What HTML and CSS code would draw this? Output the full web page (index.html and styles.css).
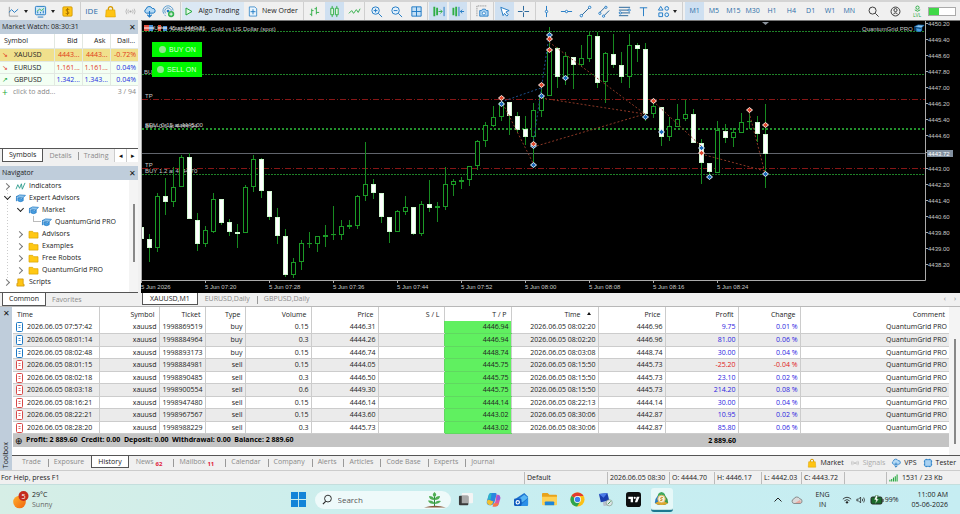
FILE: index.html
```html
<!DOCTYPE html>
<html lang="en">
<head>
<meta charset="utf-8">
<title>XAUUSD,M1 - Trading terminal</title>
<link rel="stylesheet" href="styles.css">
</head>
<body>
<svg class="defs" aria-hidden="true">
  <symbol id="cap" viewBox="0 0 12 10"><path d="M1 3 L5 1 L11.500 1.500 L8.500 4.500 Z" fill="#8fc4ec" stroke="#1d78c4" stroke-width=".8"/><path d="M3 4.500 V7.500 Q6 9.500 9 7.500 V4.500 L7.500 5.500 Z" fill="#4a9fe0" stroke="#1d78c4" stroke-width=".8"/><path d="M1.500 3.500 V8" stroke="#1d78c4"/></symbol>
  <symbol id="folder" viewBox="0 0 12 10"><path d="M1 1.500 H5 L6.500 3 H11 V9 H1 Z" fill="#ffc814" stroke="#dba400" stroke-width=".8"/></symbol>
  <symbol id="bag" viewBox="0 0 12 12"><path d="M4 5 V3.500 A2 2 0 0 1 8 3.500 V5" fill="none" stroke="#d69a00" stroke-width="1.200"/><path d="M2 4.500 H10 L10.500 11 H1.500 Z" fill="#ffc414" stroke="#dba400" stroke-width=".6"/></symbol>
  <symbol id="signal" viewBox="0 0 14 10"><circle cx="7" cy="5" r="1.200" fill="currentColor"/><path d="M4.800 3 Q3.600 5 4.800 7 M9.200 3 Q10.400 5 9.200 7 M3 2 Q1.200 5 3 8 M11 2 Q12.800 5 11 8" fill="none" stroke="currentColor" stroke-width=".8"/></symbol>
  <symbol id="cloud" viewBox="0 0 12 12"><path d="M3 7.500 A2 2 0 0 1 2.800 3.800 A3 3 0 0 1 8.500 3.200 A2.200 2.200 0 0 1 9.500 7.500 Z" fill="#b5daf5" stroke="#1d78c4" stroke-width=".9"/><path d="M6 5.500 V11 M4 9 L6 11 L8 9" fill="none" stroke="#1d78c4"/></symbol>
  <symbol id="doc" viewBox="0 0 7 10"><rect x=".5" y=".5" width="6" height="9" rx="1" fill="#fff" stroke="currentColor"/><path d="M2.500 3.500 H4.500 M2.500 5.500 H4.500" stroke="currentColor" stroke-width=".8"/></symbol>
</svg>

<header class="toolbar">
  <div class="group g-main">
    <button class="tool" aria-label="Chart type"><svg viewBox="0 0 14 14"><path d="M2.500 2 V12 H12" fill="none" stroke="#999"/><path d="M2 8 L5 5 L8 8 L12 4.500" fill="none" stroke="#1d78c4"/></svg></button><span class="caret"></span>
    <button class="tool" aria-label="Profiles"><svg viewBox="0 0 14 14"><rect x="1.500" y="1.500" width="11" height="9" rx="1" fill="#cfe6f8" stroke="#1d78c4"/><path d="M3 7 L6 4.500 L8 6 L11 3.500" fill="none" stroke="#33b04a"/><path d="M4 13 H10 M4 9 V7 M7 9 V7.500 M10 9 V6" stroke="#1d78c4"/></svg></button><span class="caret"></span>
    <button class="tool" aria-label="Market symbols"><svg viewBox="0 0 14 14"><rect x="2" y="2" width="10" height="10" rx="1" fill="#ffc414" stroke="#c89000" stroke-width=".8"/><path d="M9 5 Q7 3.700 5.600 5 Q5 6.500 7 7 Q9 7.500 8.500 9 Q7 10.300 5 9 M7 3.200 V11" fill="none" stroke="#a06c00" stroke-width=".9"/></svg></button>
  </div>
  <div class="group g-services">
    <button class="tool ide">IDE</button>
    <button class="tool" aria-label="Market"><svg viewBox="0 0 12 12"><use href="#bag"/></svg></button>
    <button class="tool muted" aria-label="Signals"><svg viewBox="0 0 14 10"><use href="#signal"/></svg></button>
    <button class="tool" aria-label="VPS"><svg viewBox="0 0 12 12"><use href="#cloud"/></svg></button>
    <button class="tool" aria-label="Community"><svg viewBox="0 0 14 14"><circle cx="6.500" cy="6.500" r="1.500" fill="#1d78c4"/><path d="M2 9.500 A5.500 5.500 0 1 1 12 6 M4 9 A3.500 3.500 0 1 1 10 6.500 M4 12 A6 6 0 0 1 3 10.500" fill="none" stroke="#3c8cc8" stroke-width=".9"/><circle cx="9.800" cy="9.800" r="3.400" fill="#35b450"/><path d="M8 9.800 H11.600 M9.800 8 V11.600" stroke="#fff"/></svg></button>
  </div>
  <div class="group g-trade">
    <button class="tool wide on"><svg viewBox="0 0 10 10"><path d="M2 1.500 L8 5 L2 8.500 Z" fill="#e4f8e6" stroke="#22a83c"/></svg>Algo Trading</button>
    <button class="tool wide"><svg viewBox="0 0 10 12"><path d="M1 1 H7 L9 3 V11 H1 Z" fill="#e9f4fc" stroke="#1d78c4" stroke-width=".8"/><path d="M5 3.500 V9 M2.300 6.200 H7.700" stroke="#1d78c4"/></svg>New Order</button>
  </div>
  <div class="group">
    <button class="tool" aria-label="Bars"><svg viewBox="0 0 14 14"><path d="M4 4 V12 M2 10 H4 M4 6 H6 M9 2 V10 M7 4 H9 M9 8 H12" stroke="#2fae45"/></svg></button>
    <button class="tool on" aria-label="Candles"><svg viewBox="0 0 14 14"><path d="M4.500 1 V13 M9.500 1 V13" stroke="#2fae45"/><path d="M3 3.500 H6 V10.500 H3 Z M8 3.500 H11 V10.500 H8 Z" fill="#dff5df" stroke="#2fae45"/></svg></button>
    <button class="tool" aria-label="Line"><svg viewBox="0 0 14 14"><path d="M1 9 L4 6 L6 9 L9 5 L11 8 L13 4" fill="none" stroke="#2fae45"/></svg></button>
  </div>
  <div class="group">
    <button class="tool" aria-label="Zoom in"><svg viewBox="0 0 14 14"><circle cx="6" cy="6" r="4" fill="#e3f1fc" stroke="#1d78c4"/><path d="M9 9 L13 13 M4 6 H8 M6 4 V8" stroke="#1d78c4"/></svg></button>
    <button class="tool" aria-label="Zoom out"><svg viewBox="0 0 14 14"><circle cx="6" cy="6" r="4" fill="#e3f1fc" stroke="#1d78c4"/><path d="M9 9 L13 13 M4 6 H8" stroke="#1d78c4"/></svg></button>
    <button class="tool" aria-label="Tile windows"><svg viewBox="0 0 14 14"><path d="M2 2 H12 V12 H2 Z M7 2 V12 M2 7 H12" fill="#c4e0f6" stroke="#1d78c4"/></svg></button>
  </div>
  <div class="group g-shift">
    <button class="tool on" aria-label="Auto scroll"><svg viewBox="0 0 14 14"><path d="M2.500 2 V12 M5.500 3 V11" stroke="#2fae45" stroke-width="2"/><path d="M7 7 H11 M9 5 L11 7 L9 9" fill="none" stroke="#2fae45"/><path d="M13 2 V12" stroke="#1d78c4"/></svg></button>
    <button class="tool on" aria-label="Chart shift"><svg viewBox="0 0 14 14"><path d="M1.500 3 V11 M4.500 2 V12" stroke="#2fae45" stroke-width="2"/><path d="M7.500 2 V12 M13 7 H9 M11 5 L9 7 L11 9" fill="none" stroke="#1d78c4"/></svg></button>
  </div>
  <div class="group">
    <button class="tool" aria-label="Screenshot"><svg viewBox="0 0 14 14"><path d="M1 12 V1 H12" fill="none" stroke="#777" stroke-dasharray="1 1"/><path d="M4 6 H6 L7 4.500 H10 L11 6 H13 V12 H4 Z" fill="#a9d2f2" stroke="#1d78c4" stroke-width=".9"/><circle cx="8.500" cy="9" r="1.700" fill="#fff" stroke="#1d78c4" stroke-width=".8"/></svg></button>
  </div>
  <div class="group g-cursor">
    <button class="tool on" aria-label="Cursor"><svg viewBox="0 0 14 14"><path d="M3 2.500 L12 6 L8.500 7.500 L11 10.500 L9.500 12 L7 9 L5.500 11.500 Z" fill="#fff" stroke="#1d78c4"/></svg></button>
    <button class="tool" aria-label="Crosshair"><svg viewBox="0 0 14 14"><path d="M7 1 V6 M7 8 V13 M1 7 H6 M8 7 H13" stroke="#1d5f96"/></svg></button>
  </div>
  <div class="group g-draw">
    <button class="tool" aria-label="Vertical line"><svg viewBox="0 0 14 14"><path d="M7 1 V13" stroke="#1d78c4"/><circle cx="7" cy="7" r="1.300" fill="#fff" stroke="#1d78c4"/></svg></button>
    <button class="tool" aria-label="Horizontal line"><svg viewBox="0 0 14 14"><path d="M1 7 H13" stroke="#1d78c4"/><circle cx="7" cy="7" r="1.300" fill="#fff" stroke="#1d78c4"/></svg></button>
    <button class="tool" aria-label="Trend line"><svg viewBox="0 0 14 14"><path d="M2 12 L12 2" stroke="#1d5f96"/><circle cx="2.500" cy="11.500" r="1.300" fill="#fff" stroke="#1d78c4"/><circle cx="11.500" cy="2.500" r="1.300" fill="#fff" stroke="#1d78c4"/></svg></button>
    <button class="tool" aria-label="Channel"><svg viewBox="0 0 14 14"><path d="M2 8 L8 2 M6 12 L12 6" stroke="#1d5f96"/><circle cx="2" cy="9" r="1.200" fill="#fff" stroke="#1d78c4"/><circle cx="8.500" cy="2.500" r="1.200" fill="#fff" stroke="#1d78c4"/><circle cx="6" cy="12" r="1.200" fill="#fff" stroke="#1d78c4"/></svg></button>
    <button class="tool" aria-label="Fibonacci"><svg viewBox="0 0 14 14"><path d="M1 2.500 H13 M1 5.500 H11 M3 8.500 H13 M1 11.500 H11" stroke="#1d5f96"/><circle cx="12" cy="5.500" r="1.200" fill="#fff" stroke="#1d78c4"/><circle cx="2.500" cy="8.500" r="1.200" fill="#fff" stroke="#1d78c4"/></svg></button>
    <button class="tool" aria-label="Text"><svg viewBox="0 0 14 14"><path d="M3 3 H11 M7 3 V12" stroke="#1d78c4"/></svg></button>
    <button class="tool" aria-label="Shapes"><svg viewBox="0 0 14 14"><path d="M1.500 5.500 L4 1.500 L6.500 5.500 Z M2 8.500 H6 V12.500 H2 Z" fill="#e3f1fc" stroke="#1d78c4"/><circle cx="10.500" cy="3.700" r="2" fill="#e3f1fc" stroke="#1d78c4"/><circle cx="10.500" cy="10.500" r="2" fill="#e3f1fc" stroke="#1d78c4"/></svg></button>
    <span class="caret"></span>
  </div>
  <div class="group g-frames">
    <button class="tool on">M1</button><button class="tool">M5</button><button class="tool">M15</button><button class="tool">M30</button><button class="tool">H1</button><button class="tool">H4</button><button class="tool">D1</button><button class="tool">W1</button><button class="tool">MN</button>
  </div>
  <div class="group g-right">
    <button class="tool" aria-label="Search"><svg viewBox="0 0 14 14"><circle cx="6" cy="6" r="3.800" fill="none" stroke="#333"/><path d="M9 9 L12.500 12.500" stroke="#333"/></svg></button>
    <button class="tool" aria-label="Account"><svg viewBox="0 0 14 14"><circle cx="7" cy="7" r="4.800" fill="none" stroke="#333"/><circle cx="7" cy="5.500" r="1.700" fill="none" stroke="#333"/><path d="M4 10.500 Q7 6.500 10 10.500" fill="none" stroke="#333"/></svg></button>
    <button class="tool lvl"><svg viewBox="0 0 10 8"><circle cx="5" cy="2.500" r="1.800" fill="none" stroke="#22a83c"/><path d="M2 5 Q5 8 8 5" fill="none" stroke="#22a83c"/></svg>LVL</button>
    <meter class="load" min="0" max="100" value="40" aria-label="Load">40</meter>
  </div>
</header>

<main class="work">
  <aside class="side">
    <section class="watch">
      <h2 class="title">Market Watch: 08:30:31<button class="close" aria-label="Close">✕</button></h2>
      <table class="quotes">
        <colgroup><col><col class="bid"><col class="bid"><col class="bid"></colgroup>
        <thead><tr><th>Symbol</th><th>Bid</th><th>Ask</th><th>Dail...</th></tr></thead>
        <tbody>
          <tr class="gold"><td><span class="dir down">↘</span>XAUUSD</td><td class="neg">4443...</td><td class="neg">4443...</td><td class="neg">-0.72%</td></tr>
          <tr><td><span class="dir down">↘</span>EURUSD</td><td class="neg">1.161...</td><td class="neg">1.161...</td><td class="pos">0.04%</td></tr>
          <tr><td><span class="dir up">↗</span>GBPUSD</td><td class="pos">1.342...</td><td class="pos">1.343...</td><td class="pos">0.04%</td></tr>
        </tbody>
      </table>
      <div class="add"><span><b>+</b>click to add...</span><span>3 / 94</span></div>
    </section>
    <nav class="tabs side-tabs"><button class="tab on">Symbols</button><button class="tab">Details</button><button class="tab">Trading</button><span class="arrows"><button aria-label="Previous">◂</button><button aria-label="Next">▸</button></span></nav>
    <section class="navigator">
      <h2 class="title">Navigator<button class="close" aria-label="Close">✕</button></h2>
      <div class="tree-box">
        <ul class="tree">
          <li class="l1"><i class="chev"></i><svg viewBox="0 0 12 10"><path d="M1 8 L3 3 L5 7 L7 2 L8 8 L11 1" fill="none" stroke="#2c9c8c"/></svg>Indicators</li>
          <li class="l1"><i class="chev open"></i><svg viewBox="0 0 12 10"><use href="#cap"/></svg>Expert Advisors</li>
          <li class="l2"><i class="chev open"></i><svg viewBox="0 0 12 10"><use href="#cap"/></svg>Market</li>
          <li class="l3"><i class="elbow"></i><svg viewBox="0 0 12 10"><use href="#cap"/></svg>QuantumGrid PRO</li>
          <li class="l2"><i class="chev"></i><svg viewBox="0 0 12 10"><use href="#folder"/></svg>Advisors</li>
          <li class="l2"><i class="chev"></i><svg viewBox="0 0 12 10"><use href="#folder"/></svg>Examples</li>
          <li class="l2"><i class="chev"></i><svg viewBox="0 0 12 10"><use href="#folder"/></svg>Free Robots</li>
          <li class="l2"><i class="chev"></i><svg viewBox="0 0 12 10"><use href="#folder"/></svg>QuantumGrid PRO</li>
          <li class="l1"><i class="chev"></i><svg viewBox="0 0 12 10"><path d="M3 1 H9 V7 H10 V9 H2 V6 H3 Z" fill="#ffc414" stroke="#c89000" stroke-width=".8"/></svg>Scripts</li>
        </ul>
        <span class="scroll"></span>
      </div>
    </section>
    <nav class="tabs side-tabs"><button class="tab on">Common</button><button class="tab">Favorites</button></nav>
  </aside>

  <section class="chart-pane">
    <div class="chart">
      <svg id="chart" viewBox="141 21 819 272" preserveAspectRatio="xMaxYMin meet" role="img" aria-label="Gold vs US Dollar, one minute candles"></svg>
      <div class="switches">
        <button>BUY ON</button>
        <button>SELL ON</button>
      </div>
    </div>
    <nav class="tabs chart-tabs"><button class="tab on">XAUUSD,M1</button><button class="tab">EURUSD,Daily</button><button class="tab">GBPUSD,Daily</button><span class="pager">‹<i></i>›</span></nav>
  </section>
</main>

<section class="toolbox">
  <div class="rail"><button class="close" aria-label="Close">✕</button><span>Toolbox</span></div>
  <div class="box-body">
    <div class="history-box">
      <table class="history">
        <colgroup><col class="c1"><col class="c2"><col class="c3"><col class="c4"><col class="c5"><col class="c6"><col class="c7"><col class="c8"><col class="c9"><col class="c10"><col class="c11"><col class="c12"><col></colgroup>
        <thead><tr><th>Time</th><th>Symbol</th><th>Ticket</th><th>Type</th><th>Volume</th><th>Price</th><th>S / L</th><th>T / P</th><th>Time<i class="sort"></i></th><th>Price</th><th>Profit</th><th>Change</th><th>Comment</th></tr></thead>
        <tbody id="deals"></tbody>
        <tfoot><tr><td colspan="10"><span class="plus">⊕</span>Profit: 2 889.60&nbsp; Credit: 0.00&nbsp; Deposit: 0.00&nbsp; Withdrawal: 0.00&nbsp; Balance: 2 889.60</td><td>2 889.60</td><td colspan="2"></td></tr></tfoot>
      </table>
      <span class="scroll"></span>
    </div>
    <nav class="tabs box-tabs">
      <button class="tab">Trade</button><button class="tab">Exposure</button><button class="tab on">History</button><button class="tab">News<sub>62</sub></button><button class="tab">Mailbox<sub>11</sub></button><button class="tab">Calendar</button><button class="tab">Company</button><button class="tab">Alerts</button><button class="tab">Articles</button><button class="tab">Code Base</button><button class="tab">Experts</button><button class="tab">Journal</button>
      <span class="links">
        <button><svg viewBox="0 0 12 12"><use href="#bag"/></svg>Market</button>
        <button class="muted"><svg viewBox="0 0 14 10"><use href="#signal"/></svg>Signals</button>
        <button><svg viewBox="0 0 12 12"><use href="#cloud"/></svg>VPS</button>
        <button><svg viewBox="0 0 12 12"><path d="M1 4 H11 M1 8 H11 M4 1 V11 M8 1 V11" stroke="#1d78c4"/><rect x="2" y="2" width="8" height="8" rx="1" fill="#a9d2f2" stroke="#1d78c4"/></svg>Tester</button>
      </span>
    </nav>
  </div>
</section>

<footer class="status">
  <span class="help">For Help, press F1</span><span>Default</span><span>2026.06.05 08:30</span><span>O: 4444.70</span><span>H: 4446.17</span><span>L: 4442.03</span><span>C: 4443.72</span><span></span>
  <span class="net"><svg viewBox="0 0 10 8"><path d="M1 8 V6 M3 8 V5 M5 8 V3.500 M7 8 V2 M9 8 V0" stroke="#22a83c" stroke-width="1.200"/></svg>1531 / 23 Kb</span>
</footer>

<div class="taskbar">
  <div class="weather">
    <svg viewBox="0 0 16 18"><defs><linearGradient id="sun" x1="0" y1="0" x2="1" y2="1"><stop offset="0" stop-color="#ffb02e"/><stop offset="1" stop-color="#f0640c"/></linearGradient></defs><circle cx="6.500" cy="11" r="6.300" fill="url(#sun)"/><circle cx="10.500" cy="5" r="5" fill="#c42b1c"/><text x="10.500" y="7.500" text-anchor="middle">5</text></svg>
    <p>29°C<br><span>Sunny</span></p>
  </div>
  <div class="apps">
    <button aria-label="Start"><svg viewBox="0 0 16 16"><path d="M0 0 H7.500 V7.500 H0 Z M8.500 0 H16 V7.500 H8.500 Z M0 8.500 H7.500 V16 H0 Z M8.500 8.500 H16 V16 H8.500 Z" fill="#1384d8"/></svg></button>
    <label class="search"><svg viewBox="0 0 12 12"><circle cx="6.500" cy="5" r="3.700" fill="none" stroke="#222"/><path d="M4 8 L1 11" stroke="#222" stroke-width="1.300"/></svg><input type="text" placeholder="Search" aria-label="Search"><svg class="plant" viewBox="0 0 22 16"><path d="M0 15.500 Q11 12 22 15.500 Z" fill="#8a5a3c"/><path d="M10.500 14 V3" stroke="#2e8540"/><path d="M10.500 5 Q7 3 10.500 0 Q14 3 10.500 5 M10.500 8 Q5 8 5 4 Q10 4 10.500 8 Q11 4 16 4 Q16 8 10.500 8 M10.500 12 Q5 12 4 8.500 Q10 8 10.500 12 Q12 8 17 9 Q15 12 10.500 12" fill="#4fae55"/></svg></label>
    <button aria-label="Task view"><svg viewBox="0 0 16 16"><rect x="4" y="1" width="12" height="11" rx="1" fill="#f4f4f4"/><rect x="1" y="4" width="10" height="10" rx="1" fill="#3a3a3a"/><rect x="4" y="4" width="7" height="8" fill="#a8a8a8"/></svg></button>
    <button aria-label="Copilot"><svg viewBox="0 0 16 16"><path d="M5 1 H10 Q12 1 11 4 L9 11 Q8 14 5 14 H4 Q0 14 1 9 L3 3 Q3.500 1 5 1" fill="#2a86e0"/><path d="M2 8 L1 10 Q1 14 5 14 Q7 13 8 10 Z" fill="#f2c02e"/><path d="M3 3 Q4 1 6 1 L5 8 L2 8 Z" fill="#2bb7c8"/><path d="M11 3 H12.500 Q16 3 15 8 L13.500 13 Q13 15.500 10 15.500 H7 Q9 14 10 10 Z" fill="#d957a8"/><path d="M12.500 3 Q16 4 15 8 L11 9 Z" fill="#9058e0"/><path d="M8 12 L13.500 12 Q13 15.500 10 15.500 H7 Z" fill="#f47a48"/></svg></button>
    <button aria-label="Outlook"><svg viewBox="0 0 16 16"><path d="M2 7 L11 1 L15 5 V13 Q15 15 13 15 H4 V8 Z" fill="#1e74d0"/><path d="M4 8 L11 3 L15 6 L9 11 Z" fill="#57b6f4"/><path d="M6 15 L15 7 V13 Q15 15 13 15 Z" fill="#2b8fe8"/><rect x="0" y="7" width="8" height="8" rx="1.500" fill="#0f5cbf"/><circle cx="4" cy="11" r="1.800" fill="none" stroke="#fff" stroke-width="1.200"/></svg></button>
    <button aria-label="File Explorer"><svg viewBox="0 0 16 16"><path d="M0 2 Q0 1 1 1 H6 L8 3 H15 Q16 3 16 4 V13 H0 Z" fill="#e8a31c"/><path d="M0 5 H16 V13 Q16 14 15 14 H1 Q0 14 0 13 Z" fill="#ffd154"/><path d="M3 14 V11 Q3 10 4 10 H12 Q13 10 13 11 V14 Z" fill="#1f86d8"/></svg></button>
    <button aria-label="Chrome"><svg viewBox="0 0 16 16"><circle cx="8" cy="8" r="7.500" fill="#fbc116"/><path d="M8 8 L1.500 4.200 A7.500 7.500 0 0 1 14.500 4.200 H8 Z" fill="#e33b2e"/><path d="M8 8 L1.500 4.200 A7.500 7.500 0 0 0 7.500 15.500 L11 10 Z" fill="#2da44e"/><circle cx="8" cy="8" r="3.700" fill="#fff"/><circle cx="8" cy="8" r="2.900" fill="#3b7ded"/></svg></button>
    <button aria-label="Remote desktop"><svg viewBox="0 0 16 16"><path d="M1 2 L10 1 L12 9 L3 11 Z" fill="#1b3fae"/><path d="M1 2 L10 1 L6 6 Z" fill="#4b7be8"/><path d="M5 11 L10 10 L13 14 L6 15 Z" fill="#b8c0cc"/><circle cx="12" cy="11.500" r="3.300" fill="#dfe6ea" stroke="#7f9a86" stroke-width=".7"/><path d="M10.500 13 L13.500 10" stroke="#3b9c4a"/></svg></button>
    <button aria-label="TradingView"><svg viewBox="0 0 16 16"><rect width="16" height="16" rx="3" fill="#0d0f10"/><path d="M2.500 5 H7.500 V11 H5 V7.500 H2.500 Z M11.500 5 H14.500 L12 11 H9.500 Z" fill="#fff"/><circle cx="9.300" cy="6.200" r="1.200" fill="#fff"/></svg></button>
    <button class="active" aria-label="Trading terminal"><svg viewBox="0 0 16 16"><path d="M4 8 Q3 2 8 1 Q13 2 12 8 Z" fill="#3fa860"/><path d="M4 5 Q1 8 1 12 Q2 15 7 15 Z" fill="#2b7ec0"/><path d="M12 5 Q15 8 15 12 Q14 15 9 15 Z" fill="#3c9a4c"/><path d="M1 13 Q8 17 15 13 L10 11 H5 Z" fill="#e0a82e"/><circle cx="8" cy="8.500" r="4" fill="#f5efe0" stroke="#d8b45c"/><path d="M9.500 7 Q7 6 7 8 Q9.500 8.500 8.500 10 L6.500 10" fill="none" stroke="#d08a1c"/></svg></button>
  </div>
  <div class="tray">
    <svg viewBox="0 0 10 10"><path d="M1.500 6.500 L5 3 L8.500 6.500" fill="none" stroke="#222"/></svg>
    <svg class="wide" viewBox="0 0 12 10"><path d="M3 8.500 A2.300 2.300 0 0 1 2.800 4 A3.300 3.300 0 0 1 8.800 3.800 A2.400 2.400 0 0 1 9.300 8.500 Z" fill="#dadada" stroke="#777" stroke-width=".8"/><path d="M4 8 L9 5 L10 8 Z" fill="#e9a9a0"/></svg>
    <p class="lang">ENG<br>IN</p>
    <svg viewBox="0 0 12 10"><path d="M1 4 Q6 -.5 11 4 M2.800 6 Q6 3 9.200 6" fill="none" stroke="#222"/><circle cx="6" cy="7.800" r="1.400" fill="#222"/></svg>
    <svg viewBox="0 0 12 10"><path d="M1 4 H3 L5.500 1.500 V8.500 L3 6 H1 Z M7.500 3.500 Q8.500 5 7.500 6.500 M9.200 2 Q11.200 5 9.200 8" fill="none" stroke="#222" stroke-width=".9"/></svg>
    <span class="battery"><svg viewBox="0 0 14 10"><rect x="1" y="2" width="11" height="7" rx="1.500" fill="#1c6a2a" stroke="#222"/><path d="M13 4 V7" stroke="#222"/><path d="M6 0 L4 5 H6 L5 9 L9 4 H7 L8 0 Z" fill="#fff" stroke="#1c6a2a" stroke-width=".6"/></svg>99%</span>
    <p class="clock">11:00 AM<br>05-06-2026</p>
  </div>
</div>
<script src="app.js"></script>
</body>
</html>
```
FILE: styles.css
```css
* { box-sizing: border-box; }
body {
  margin: 0;
  height: 100vh;
  display: flex;
  flex-direction: column;
  overflow: hidden;
  background: #f0f0f0;
  color: #222;
  font: 7px/12px "Open Sans", "Noto Sans", sans-serif;
}
button, input { font: inherit; color: inherit; border: 0; padding: 0; margin: 0; background: none; }
p, h2, ul { margin: 0; padding: 0; font-weight: 400; }
.defs { position: absolute; width: 0; height: 0; }
.muted { color: #aaa; }

/* toolbar */
.toolbar {
  flex: none;
  height: 20px;
  display: grid;
  grid-template-columns: 80px 100px 123px 61px 63px 43px 23px 42px 147px 177px 1fr;
  border-top: 2px solid #d4d4d4;
}
.group { display: flex; min-width: 0; padding-left: 1px; }
.group + .group { border-left: 1px solid #cfcfcf; }
.tool { flex: 1; display: flex; align-items: center; justify-content: center; color: #2a6da8; white-space: nowrap; }
.tool svg { width: 13px; height: 13px; flex: none; }
.tool.on { background: #cfe0f1; }
.tool.muted { color: #aaa; }
.ide { font-size: 8px; }
.caret { flex: none; align-self: center; width: 0; border: 2px solid transparent; border-top: 3px solid #222; border-bottom: 0; margin: 0 2px 0 0; }
.g-main { padding: 0 2px 0 3px; }
.g-services { padding-right: 2px; }
.tool.wide { flex: none; color: #222; width: 62px; gap: 5px; padding-right: 3px; }
.tool.wide + .wide { gap: 4px; padding: 0; width: 58px; }
.tool.wide svg { width: 10px; height: 11px; }
.tool.wide.on { background: #dbe8f4; }
.g-shift { padding-right: 3px; gap: 2px; }
.g-cursor { padding-right: 2px; }
.g-draw .caret { margin-right: 5px; }
.g-frames { border-right: 0; padding-left: 2px; }
.group.g-right { border-left: 0; justify-content: flex-end; align-items: center; padding-right: 4px; }
.g-right .tool { flex: none; width: 22px; }
.tool.lvl { flex-direction: column; color: #22a83c; font-size: 5px; line-height: 5px; }
.tool.lvl svg { width: 9px; height: 8px; }
.load { appearance: none; width: 28px; height: 9px; border: 1px solid #aaa; background: linear-gradient(90deg, #40d848 40%, #fff 40%); }
.load::-webkit-meter-inner-element { display: none; }

/* panes */
.work { flex: 1; min-height: 0; display: grid; grid-template-columns: 138px 1fr; column-gap: 3px; }
.side { display: flex; flex-direction: column; min-height: 0; }
.title { flex: none; height: 14px; display: flex; justify-content: space-between; align-items: center; background: #bfcddb; font-size: 7px; padding: 0 2px; }
.close { font-size: 8px; line-height: 8px; width: 8px; color: #111; }
.watch { height: 128px; background: #fff; }
.quotes { width: 100%; table-layout: fixed; border-collapse: collapse; }
.bid { width: 28px; }
.quotes th, .quotes td { padding: 0 2px; height: 12px; text-align: right; font-weight: 400; white-space: nowrap; overflow: hidden; border: 1px solid #e2e8e2; border-width: 0 0 1px 1px; }
.quotes th { height: 14px; padding: 0 4px; }
.quotes th:last-child { padding-right: 3px; }
.quotes th:first-child, .quotes td:first-child { text-align: left; border-left: 0; }
.quotes td { background: #f3fff3; line-height: 11px; }
.quotes .gold td { background: #f0e08c; height: 13px; }
.dir { display: inline-block; width: 12px; }
.down, .quotes .neg { color: #e03a1a; }
.up { color: #22a83c; }
.quotes .pos { color: #1c2ee0; }
.add { display: flex; justify-content: space-between; padding: 0 2px; color: #888; }
.add b { display: inline-block; width: 11px; color: #22a83c; font-size: 10px; font-weight: 400; vertical-align: bottom; }

.tabs { display: flex; color: #8a8a8a; }
.tab { padding: 0 9px; position: relative; white-space: nowrap; }
.tab + .tab::before { content: ""; position: absolute; left: 0; top: 3px; height: 8px; border-left: 1px solid #999; }
.tab.on::before, .tab.on + .tab::before { display: none; }
.tab.on { background: #fff; color: #222; border: 1px solid #555; border-top: 0; }
.side-tabs { flex: none; height: 14px; border-top: 1px solid #555; padding-left: 2px; }
.side-tabs .tab { padding: 0 6px; }
.arrows { margin-left: auto; display: flex; background: #fff; }
.arrows button { width: 12px; border-left: 1px solid #ccc; color: #111; line-height: 10px; }
.navigator { flex: 1; min-height: 0; display: flex; flex-direction: column; margin-top: 4px; }
.tree-box { flex: 1; min-height: 0; display: flex; background: #fff; overflow: hidden; }
.tree { flex: 1; list-style: none; background: repeating-linear-gradient(#fff 0 2px, #ccc 2px 3px) 7px 8px / 1px 92px no-repeat; }
.tree li { display: flex; align-items: center; height: 12px; padding-left: 4px; }
.tree .l2 { padding-left: 17px; }
.tree .l3 { padding-left: 33px; }
.tree svg { width: 11px; height: 9px; margin-right: 3px; }
.chev, .elbow { width: 11px; height: 6px; display: flex; }
.chev::before { content: ""; width: 4px; height: 4px; margin-top: 1px; border: solid #777; border-width: 1px 1px 0 0; transform: rotate(45deg); }
.chev.open::before { border-color: #222; margin-top: -1px; margin-left: 1px; transform: rotate(135deg); }
.elbow { width: 8px; align-self: flex-start; border: solid #bbb; border-width: 0 0 1px 1px; }
.scroll { flex: none; width: 9px; background: #f4f4f4; }
.scroll::before { content: ""; display: block; width: 2px; height: 58px; margin: 24px 0 0 4px; background: #888; }

/* chart */
.chart-pane { min-width: 0; display: flex; flex-direction: column; border-top: 1px solid #777; }
.chart { flex: 1; min-height: 0; position: relative; background: #000; }
#chart { display: block; width: 100%; height: 100%; font: 6px "Liberation Sans", sans-serif; fill: #c8c8c8; }
.body-up { fill: #000; stroke: #1b9a26; }
.body-down { fill: #fff; stroke: #d0f8d0; }
.wick { stroke: #178a20; }
.order { stroke: #1f8228; stroke-dasharray: 2 1; }
.order.strong { stroke-width: 2; stroke: #23902c; stroke-dasharray: 2 2; }
.target { stroke: #861616; stroke-dasharray: 6 2 1 2; }
.now { stroke: #60646c; }
.axis { stroke: #aaa; fill: none; }
.deal-sell { stroke: #8c3826; stroke-dasharray: 2 2; stroke-width: 1; }
.deal-buy { stroke: #1c4f8c; stroke-dasharray: 2 2; stroke-width: 1; }
.mark-buy { fill: #1a68b8; stroke: #dcebf8; }
.mark-sell { fill: #e2492e; stroke: #fbe6e0; }
.now-box { fill: #8290a0; }
.now-text { fill: #fff; }
.switches { position: absolute; left: 11px; top: 21px; display: flex; flex-direction: column; gap: 5px; }
.switches button { width: 50px; height: 15px; background: #00f800; color: #d8ffd8; font: 7px/15px "Liberation Sans", sans-serif; display: flex; align-items: center; gap: 3px; padding-left: 7px; white-space: nowrap; }
.switches button + button { padding-left: 5px; }
.switches button::before { content: ""; width: 7px; height: 7px; border-radius: 50%; background: #90e890; }
.chart-tabs { flex: none; height: 13px; padding: 0 4px 1px 1px; }
.chart-tabs .tab { padding: 0 7px; }
.pager { margin-left: auto; color: #888; display: flex; gap: 4px; }

/* toolbox */
.toolbox { flex: none; display: flex; border-top: 1px solid #b8b8b8; }
.rail { flex: none; width: 12px; background: #bfcddb; display: flex; flex-direction: column; justify-content: space-between; align-items: center; padding: 2px 0; }
.rail span { writing-mode: vertical-rl; transform: rotate(180deg); }
.box-body { flex: 1; min-width: 0; }
.history-box { display: flex; background: #fff; padding: 0 0 9px 1px; height: 148px; }
.history { flex: 1; width: 0; table-layout: fixed; border-collapse: collapse; }
.history-box .scroll { width: 11px; margin-bottom: -9px; }
.history-box .scroll::before { height: 105px; margin: 32px 0 0 5px; }
.history th, .history td { padding: 0 2px; text-align: right; font-weight: 400; white-space: nowrap; overflow: hidden; border-left: 1px solid #ccc; line-height: 11px; height: 12px; }
.history th { height: 14px; padding-right: 4px; padding-top: 1px; }
.history th:first-child, .history td:first-child { text-align: left; border-left: 0; }
.history th:first-child { padding-left: 4px; }
.history tbody td { border-bottom: 1px solid #ccc; }
.history tbody tr:nth-child(even) td { background: #ebebeb; height: 13px; }
.history tbody td:nth-child(8), .history tbody tr:nth-child(even) td:nth-child(8) { background: #60f060; border-color: #60d860; }
.history .gain { color: #2a22e0; }
.history .loss { color: #e02020; }
.history svg { width: 7px; height: 10px; margin: 0 4px 0 1px; vertical-align: middle; }
.buy { color: #1d78c4; }
.sell { color: #d84848; }
.history tfoot td { height: 13px; border: 0; background: #c4c4c4; color: #000; font-weight: 700; }
.plus { display: inline-block; width: 11px; font-weight: 400; font-size: 9px; vertical-align: middle; }
.sort { display: inline-block; border: 2px solid transparent; border-bottom: 3px solid #111; border-top: 0; margin: 0 3px 2px 6px; }
.c1 { width: 86px; } .c2 { width: 60px; } .c3 { width: 46px; } .c4 { width: 40px; } .c5 { width: 66px; }
.c6 { width: 67px; } .c7 { width: 66px; } .c8 { width: 67px; } .c9 { width: 87px; } .c10 { width: 67px; }
.c11 { width: 73px; } .c12 { width: 62px; }
.box-tabs { height: 15px; border-top: 1px solid #555; background: #f0f0f0; align-items: stretch; gap: 1px; }
.box-tabs .tab { padding: 0 6px; height: 12px; }
.box-tabs .tab:first-child { margin-left: 4px; }
.box-tabs .tab sub { color: #e0203c; font-size: 6px; font-weight: 700; line-height: 6px; margin: 0 4px 0 2px; }
.links { margin-left: auto; display: flex; gap: 6px; padding-right: 4px; color: #222; }
.links .muted { color: #aaa; }
.links button { display: flex; align-items: center; gap: 3px; }
.links svg { width: 10px; height: 10px; }

/* status bar */
.status { flex: none; height: 14px; display: grid; grid-template-columns: 524px 83px 62px 45px 47px 40px 43px 42px 1fr; border-top: 1px solid #ccc; align-items: center; }
.status span { height: 12px; border-left: 1px solid #bbb; padding-left: 2px; white-space: nowrap; }
.status .help { border: 0; padding-left: 1px; }
.net svg { width: 9px; height: 8px; margin-right: 4px; vertical-align: middle; }

/* taskbar */
.taskbar { flex: none; height: 30px; display: grid; grid-template-columns: 1fr auto 1fr; align-items: center; background: linear-gradient(90deg, #d6eee6, #c8eef0 50%, #c6edf2); border-top: 1px solid #c4dedd; line-height: 10px; }
.weather { display: flex; align-items: center; gap: 3px; padding-left: 13px; }
.weather svg { width: 16px; height: 18px; }
.weather text { font: 7px "Open Sans", sans-serif; fill: #fff; }
.weather span { color: #666; }
.apps { display: flex; align-items: center; gap: 6px; }
.apps button { width: 22px; height: 24px; display: flex; align-items: center; justify-content: center; border-radius: 3px; margin-right: 0; }
.apps button svg { width: 15px; height: 15px; }
.apps .active { background: #e6f8f8; box-shadow: inset 0 -1px #bfe0e0; border-bottom: 2px solid #1c7890; }
.search { display: flex; align-items: center; width: 136px; height: 18px; border-radius: 9px; background: #eefafa; padding: 0 5px 0 7px; margin: 0 -2px 0 -1px; }
.search svg { width: 11px; height: 11px; flex: none; }
.search .plant { width: 22px; height: 16px; }
.search input { flex: 1; min-width: 0; margin-left: 5px; font-size: 8px; outline: 0; }
.search input::placeholder { color: #555; opacity: 1; }
.tray { display: flex; align-items: center; justify-content: flex-end; gap: 4px; padding-right: 12px; }
.tray > svg { width: 10px; height: 10px; }
.tray > svg.wide { width: 12px; margin-left: 4px; }
.lang { text-align: center; margin: 0 8px; }
.battery { display: flex; align-items: center; gap: 1px; }
.battery svg { flex: none; width: 14px; height: 10px; }
.clock { text-align: right; margin-left: 9px; }
```
FILE: app.js
```js
// Candles run every 8 units: [high, body top, body bottom, low, rising]
const candles = [
  [227,227,239,239,0],[234,239,248,262,0],[193,196,248,252,1],[178,196,202,215,0],[167,187,202,207,1],
  [155,157,187,187,1],[153,157,219,219,0],[213,220,244,251,0],[226,230,244,247,1],[193,199,232,233,1],
  [199,199,223,225,0],[219,222,232,236,0],[224,232,234,248,0],[185,187,233,233,1],[155,159,187,192,1],
  [158,159,191,198,0],[191,191,217,220,0],[208,217,236,244,0],[229,236,275,277,0],[258,262,275,278,1],
  [240,243,262,270,1],[232,243,244,248,1],[236,236,244,252,1],[225,235,237,247,1],[206,234,235,240,1],
  [220,226,235,240,1],[220,225,227,229,1],[195,196,226,229,1],[142,184,196,201,1],[179,184,193,199,0],
  [193,193,217,223,0],[217,217,232,243,0],[210,211,232,232,1],[196,207,212,215,1],[207,207,234,235,0],
  [201,204,234,236,1],[180,204,208,212,0],[202,206,208,222,1],[167,184,207,210,1],[179,181,185,196,1],
  [177,180,182,189,1],[166,166,180,186,1],[140,141,166,170,1],[122,125,141,147,1],[106,117,126,127,1],
  [98,102,117,121,1],[102,102,116,135,0],[112,116,130,133,0],[116,129,137,145,0],[103,110,137,165,1],
  [87,97,111,117,1],[27,49,96,96,1],[47,48,77,88,0],[52,56,78,85,1],[57,57,65,89,0],
  [45,58,65,67,1],[32,35,59,62,1],[32,36,83,88,0],[52,53,82,103,1],[34,54,65,68,0],
  [52,65,77,83,0],[34,45,77,88,1],[43,45,49,62,0],[43,49,114,121,0],[100,106,114,118,1],
  [107,107,137,146,0],[117,126,137,141,1],[104,119,127,127,1],[100,114,119,121,1],[109,114,143,143,0],
  [139,143,163,184,0],[163,163,172,180,0],[121,130,173,173,1],[124,131,138,143,0],[128,132,138,147,1],
  [113,122,133,133,1],[110,121,122,129,1],[116,122,134,142,0],[104,134,154,188,0]
];
const line = (x1, y1, x2, y2, c) => `<line x1="${x1}" y1="${y1}" x2="${x2}" y2="${y2}" class="${c}"/>`;
const text = (x, y, s, c = "") => `<text x="${x}" y="${y}" class="${c}">${s}</text>`;
let out = "";

[[31.5,"order"],[74.5,"order"],[99.5,"target"],[129,"order strong"],[153.5,"now"],[168.5,"target"],[174.5,"order"]]
  .forEach(([y, c]) => { out += line(142, y, 925, y, c); });

out += text(144, 74, "BUY") + text(145, 98, "TP") + text(145, 127, "SELL 0.15 at 4445.00") + text(145, 128, "BUY 0.6 at 4444.94")
  + text(145, 167, "TP") + text(145, 173, "BUY 1.2 at 4444.70")
  + text(150, 30, "BUY 0.45 at 4449.81") + text(170, 31, "XAUUSD,M1:") + text(211, 31, "Gold vs US Dollar (spot)")
  + text(862, 31, "QuantumGrid PRO");
out += `<path d="M144 25h5v6h-5z M158 25h3v6h-3z" fill="#e05040"/><path d="M149 25h4v6h-4z M163 26h4v5h-4z" fill="#4a90d8"/><path d="M144 28h10M158 28h9" stroke="#fff"/><path d="M762 22h7l-3.500 3z" fill="#8a929c"/>`;
out += `<svg x="913" y="24" width="12" height="9"><use href="#cap"/></svg>`;

candles.forEach(([hi, top, bottom, low, up], i) => {
  const x = 141 + 8 * i;
  out += line(x + .5, hi, x + .5, low, "wick");
  out += `<rect x="${x - 1.5}" y="${top + .5}" width="4" height="${Math.max(bottom - top - 1, .1)}" class="${up ? "body-up" : "body-down"}"/>`;
});

[[501,100,533,163,"sell"],[541,98,645,114,"sell"],[533,147,645,114,"sell"],[549,42,645,114,"sell"],[653,101,701,146,"sell"],
 [701,154,765,171,"sell"],[749,112,765,173,"sell"],[501,102,541,88,"buy"],[533,145,549,36,"buy"]]
  .forEach(([a, b, c, d, k]) => { out += line(a, b, c, d, "deal-" + k); });

[[501,104,"buy"],[501,98,"sell"],[541,85,"sell"],[541,96,"buy"],[549,35,"buy"],[549,39,"sell"],[549,50,"sell"],[565,78,"buy"],
 [533,146,"buy"],[533,144,"sell"],[533,165,"buy"],[645,117,"buy"],[653,101,"sell"],[661,132,"buy"],[701,148,"buy"],[701,153,"sell"],
 [709,177,"buy"],[749,110,"sell"],[765,125,"sell"],[765,174,"buy"]]
  .forEach(([x, y, k]) => { out += `<path d="M${x - 2.5} ${y}l3-2.500 3 2.500-3 2.500z" class="mark-${k}"/>`; });

out += `<path d="M925.500 21V280.500M141.500 21V280.500H925.500" class="axis"/>`;
for (let i = 0; i < 16; i++) {
  const y = Math.round(23 + i * 16.07) + .5;
  out += line(925, y, 928, y, "axis");
  if (i !== 8) out += text(928, y + 2, (4450.2 - i * .8).toFixed(2));
}
out += `<rect x="927" y="150" width="26" height="7" class="now-box"/>` + text(928, 156, "4443.72", "now-text");
["5 Jun 2026","5 Jun 07:20","5 Jun 07:28","5 Jun 07:36","5 Jun 07:44","5 Jun 07:52","5 Jun 08:00","5 Jun 08:08","5 Jun 08:16","5 Jun 08:24"]
  .forEach((s, i) => { out += line(141.5 + 64 * i, 280, 141.5 + 64 * i, 283, "axis") + text(141 + 64 * i, 289, s); });
document.getElementById("chart").innerHTML = out;

const deals = [
  ["07:57:42","1998869519","buy","0.15","4446.31","4446.94","08:02:20","4446.96","9.75","0.01"],
  ["08:01:14","1998884964","buy","0.3","4444.26","4446.94","08:02:20","4446.96","81.00","0.06"],
  ["08:02:48","1998893173","buy","0.15","4446.74","4448.74","08:03:08","4448.74","30.00","0.04"],
  ["08:01:15","1998884981","sell","0.15","4444.05","4445.75","08:15:50","4445.73","-25.20","-0.04"],
  ["08:02:18","1998890485","sell","0.3","4446.50","4445.75","08:15:50","4445.73","23.10","0.02"],
  ["08:03:18","1998900554","sell","0.6","4449.30","4445.75","08:15:50","4445.73","214.20","0.08"],
  ["08:16:21","1998947480","sell","0.15","4446.14","4444.14","08:22:13","4444.14","30.00","0.04"],
  ["08:22:21","1998967567","sell","0.15","4443.60","4443.02","08:30:06","4442.87","10.95","0.02"],
  ["08:28:20","1998988229","sell","0.3","4445.73","4443.02","08:30:06","4442.87","85.80","0.06"]
];
document.getElementById("deals").innerHTML = deals.map(([t, id, type, vol, open, tp, end, close, profit, change]) => {
  const tone = profit < 0 ? "loss" : "gain";
  return `<tr><td><svg class="${type}" viewBox="0 0 7 10"><use href="#doc"/></svg>2026.06.05 ${t}</td><td>xauusd</td><td>${id}</td><td>${type}</td><td>${vol}</td><td>${open}</td><td></td><td>${tp}</td><td>2026.06.05 ${end}</td><td>${close}</td><td class="${tone}">${profit}</td><td class="${tone}">${change} %</td><td>QuantumGrid PRO</td></tr>`;
}).join("");
```
